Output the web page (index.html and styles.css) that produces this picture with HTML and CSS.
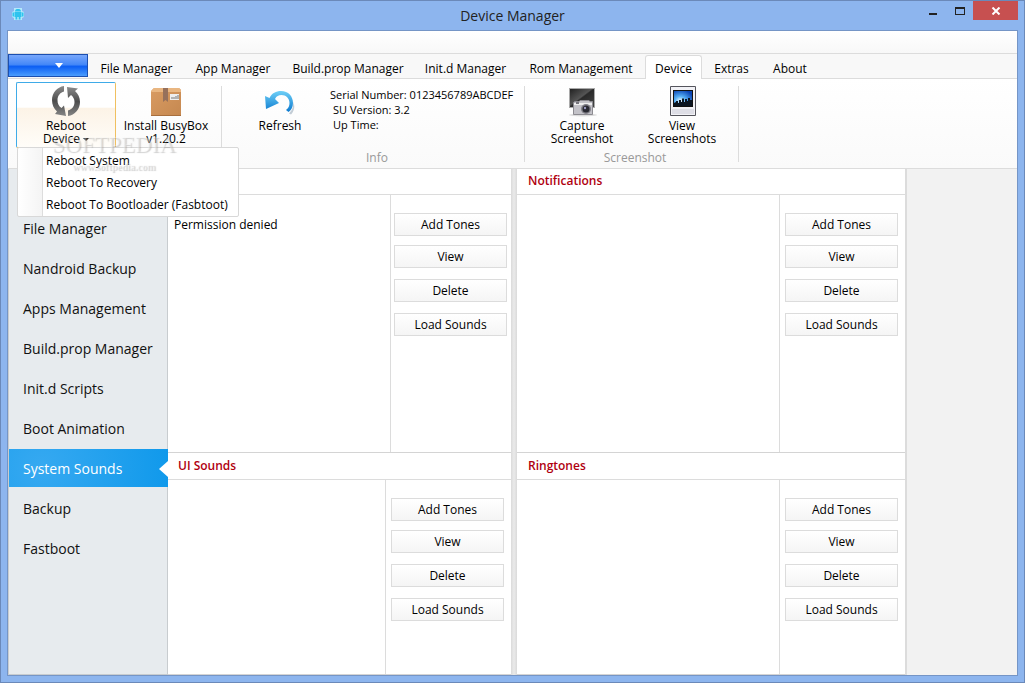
FILE: index.html
```html
<!DOCTYPE html>
<html lang="en">
<head>
<meta charset="utf-8">
<title>Device Manager</title>
<link rel="stylesheet" href="styles.css">
</head>
<body>
<div class="window">
  <header class="titlebar">
    <svg class="app-icon" viewBox="0 0 12 14" width="12" height="14" aria-hidden="true">
      <path fill="#b5e9fb" d="M2 1h8v3l2 1v5l-2 1v2H2v-2l-2-1V5l2-1z"/>
      <path fill="#2fc3ee" d="M3 4.500C3 2.600 4.300 2 6 2s3 .6 3 2.500zM2.500 5h7v5h-7zM.5 5.500h1.500v4H.5zM10 5.500h1.500v4H10zM3.500 10h1.800v2.500H3.500zM6.700 10h1.800v2.500H6.700z"/>
    </svg>
    <h1 class="title">Device Manager</h1>
    <div class="controls">
      <button class="control" aria-label="Minimize"><svg width="12" height="14" viewBox="0 0 12 14"><path fill="#222" d="M2 12h8v2H2z"/></svg></button>
      <button class="control" aria-label="Maximize"><svg width="12" height="14" viewBox="0 0 12 14"><path fill="#222" fill-rule="evenodd" d="M1 6h10v8H1zM2 8v5h8V8z"/></svg></button>
      <button class="control control-close" aria-label="Close"><svg width="10" height="8" viewBox="0 0 10 8"><path fill="none" stroke="#fff" stroke-width="2" d="M1.500.5l7 7M8.500.5l-7 7"/></svg></button>
    </div>
  </header>
  <div class="client">
    <div class="quickbar"></div>
    <nav class="tabs">
      <button class="file-tab" aria-label="Application menu"><svg width="8" height="5" viewBox="0 0 8 5"><path fill="#fff" d="M0 0h8L4 5z"/></svg></button>
      <button class="tab">File Manager</button>
      <button class="tab">App Manager</button>
      <button class="tab">Build.prop Manager</button>
      <button class="tab">Init.d Manager</button>
      <button class="tab">Rom Management</button>
      <button class="tab tab-active">Device</button>
      <button class="tab">Extras</button>
      <button class="tab">About</button>
    </nav>
    <div class="ribbon">
      <section class="group group-device">
        <div class="dropdown">
          <button class="tool tool-open">
            <svg class="tool-icon" viewBox="0 0 32 32" aria-hidden="true">
              <defs><linearGradient id="steel" x1="0" y1="0" x2="0" y2="1"><stop offset="0" stop-color="#8a8a8a"/><stop offset=".5" stop-color="#4c4c4c"/><stop offset="1" stop-color="#858585"/></linearGradient></defs>
              <path fill="url(#steel)" d="M14 1C7 2 2 8 2 15c0 5 2 9 5 11.500L5 29l11 2-2-10.500-2.500 2.500C8.500 21 7.500 18.500 7.500 15c0-4 2.500-7.500 6.500-8.500z"/>
              <path fill="url(#steel)" d="M18 31c7-1 12-7 12-14 0-4.500-2-8.500-5-11l3-2.500L17 2l1 11 3-3c2 1.500 3.500 4 3.500 7 0 4-2.500 7.500-6.500 8.500z"/>
            </svg>
            <span>Reboot<br>Device <i class="caret"></i></span>
          </button>
          <ul class="menu">
            <li><button class="menu-item">Reboot System</button></li>
            <li><button class="menu-item">Reboot To Recovery</button></li>
            <li><button class="menu-item">Reboot To Bootloader (Fasbtoot)</button></li>
          </ul>
          <div class="watermark" aria-hidden="true"><b>SOFTPEDIA</b><span>www.softpedia.com</span></div>
        </div>
        <button class="tool">
          <svg class="tool-icon" viewBox="0 0 32 32" aria-hidden="true">
            <defs><linearGradient id="card" x1="0" y1="0" x2="1" y2="1"><stop offset="0" stop-color="#d99b62"/><stop offset="1" stop-color="#c58850"/></linearGradient></defs>
            <path fill="url(#card)" d="M2 5l2-2h25l2 2v26H1V6z"/>
            <path fill="#e9b681" d="M2 5l2-2h25l2 2v2H1z"/>
            <path fill="#96705b" d="M13 3h5v14l-2.500-2-2.500 2z"/>
            <path fill="#eee" d="M20 9h9v6h-9z"/><path stroke="#777" d="M21 13h2m1-1v2m2-3v3m2-4v4"/>
            <path stroke="#a86f3e" d="M1 30.500h30"/>
          </svg>
          <span>Install BusyBox<br>v1.20.2</span>
        </button>
      </section>
      <section class="group group-info">
        <div class="group-body">
          <button class="tool">
            <svg class="tool-icon" viewBox="0 0 32 32" aria-hidden="true">
              <defs><linearGradient id="azure" x1="0" y1="0" x2="0" y2="1"><stop offset="0" stop-color="#6fd0f7"/><stop offset="1" stop-color="#0b79cf"/></linearGradient></defs>
              <path fill="#c3cdd6" d="M25 28.500c3-3 5-7 4-12l1 3c1 4-1 8-3 10z"/>
              <path fill="url(#azure)" d="M1 11l4.500 2C8 8 12 6 17 6c7.500 0 12 5.500 12 12 0 4-2 7.500-4.500 9L22 25c2.500-2 3.500-4 3.500-7 0-4.500-3.500-8-8-8-3 0-5 1-6.500 4l4 4L2 24z"/>
            </svg>
            <span>Refresh</span>
          </button>
          <div class="info"><p>Serial Number: 0123456789ABCDEF</p><p class="info-sub">SU Version: 3.2</p><p class="info-sub">Up Time:</p></div>
        </div>
        <h2 class="group-label">Info</h2>
      </section>
      <section class="group group-shots">
        <div class="group-body">
          <button class="tool">
            <svg class="tool-icon" viewBox="0 0 32 32" aria-hidden="true">
              <defs><linearGradient id="screen" x1="0" y1="0" x2="1" y2="1"><stop offset="0" stop-color="#222"/><stop offset=".45" stop-color="#555"/><stop offset=".5" stop-color="#2a2a2a"/><stop offset="1" stop-color="#444"/></linearGradient></defs>
              <path fill="#aaa" d="M3 3h26v20H3z"/><path fill="url(#screen)" d="M4 4h24v18H4z"/>
              <ellipse cx="17" cy="30" rx="14" ry="1.500" fill="#ddd"/>
              <path fill="#c3c2c8" stroke="#8c8b91" d="M7.500 17.500l1.500-1h4l1-1h9l1 1h2.500v13h-19z"/>
              <path fill="#eee" d="M8 18h18v2H8z"/><path fill="#76757c" d="M10 17h3v2h-3z"/>
              <circle cx="20" cy="24" r="5" fill="#807f87"/><circle cx="20" cy="24" r="3.500" fill="#292932"/><circle cx="19" cy="23" r="1.200" fill="#9a9ac0"/>
            </svg>
            <span>Capture<br>Screenshot</span>
          </button>
          <button class="tool">
            <svg class="tool-icon" viewBox="0 0 32 32" aria-hidden="true">
              <defs><radialGradient id="sky" cx=".35" cy=".65" r=".75"><stop offset="0" stop-color="#f3fcff"/><stop offset=".4" stop-color="#55aef5"/><stop offset="1" stop-color="#0b44b2"/></radialGradient></defs>
              <path fill="#f2f2f6" stroke="#55555d" d="M4.500 1.500h25v29h-25z"/>
              <path fill="#111" d="M7 5h20v17H7z"/><path fill="url(#sky)" d="M8 6h18v15H8z"/>
              <path fill="#0b1522" d="M8 18l2-1v-1h2v2h1v-3h2v2h1v-3l1-1 1 1v3h1v-3h2v2h1v-3h2v2h2v6H8z"/>
              <path fill="#dedee6" d="M6 24h22v5H6z"/>
            </svg>
            <span>View<br>Screenshots</span>
          </button>
        </div>
        <h2 class="group-label">Screenshot</h2>
      </section>
    </div>
    <div class="content">
      <nav class="sidebar">
        <a class="side-link" href="#">File Manager</a>
        <a class="side-link" href="#">Nandroid Backup</a>
        <a class="side-link" href="#">Apps Management</a>
        <a class="side-link" href="#">Build.prop Manager</a>
        <a class="side-link" href="#">Init.d Scripts</a>
        <a class="side-link" href="#">Boot Animation</a>
        <a class="side-link side-active" href="#">System Sounds</a>
        <a class="side-link" href="#">Backup</a>
        <a class="side-link" href="#">Fastboot</a>
      </nav>
      <main class="column column-left">
        <section class="panel panel-top">
          <h2 class="panel-title"></h2>
          <div class="panel-body">
            <div class="list">Permission denied</div>
            <div class="actions actions-wide"><button class="action action-first">Add Tones</button><button class="action">View</button><button class="action">Delete</button><button class="action">Load Sounds</button></div>
          </div>
        </section>
        <section class="panel panel-bottom">
          <h2 class="panel-title">UI Sounds</h2>
          <div class="panel-body">
            <div class="list"></div>
            <div class="actions"><button class="action action-first">Add Tones</button><button class="action">View</button><button class="action">Delete</button><button class="action">Load Sounds</button></div>
          </div>
        </section>
      </main>
      <div class="splitter"></div>
      <div class="column column-right">
        <section class="panel panel-top">
          <h2 class="panel-title">Notifications</h2>
          <div class="panel-body">
            <div class="list"></div>
            <div class="actions"><button class="action action-first">Add Tones</button><button class="action">View</button><button class="action">Delete</button><button class="action">Load Sounds</button></div>
          </div>
        </section>
        <section class="panel panel-bottom">
          <h2 class="panel-title">Ringtones</h2>
          <div class="panel-body">
            <div class="list"></div>
            <div class="actions"><button class="action action-first">Add Tones</button><button class="action">View</button><button class="action">Delete</button><button class="action">Load Sounds</button></div>
          </div>
        </section>
      </div>
      <div class="blank"></div>
    </div>
  </div>
</div>
</body>
</html>
```
FILE: styles.css
```css
* { box-sizing: border-box; }
body { margin: 0; font: 12px/15px "Open Sans", "Noto Sans", sans-serif; color: #000; }
button { margin: 0; padding: 0; border: 0; background: none; font: inherit; color: inherit; }
h1, h2, p, ul { margin: 0; padding: 0; font-weight: normal; }
svg { display: block; }

.window { display: flex; flex-direction: column; height: 100vh; border: 1px solid #6b89b9; background: #8db5ee; padding: 0 6px 6px; }
.titlebar { display: grid; grid-template-columns: 1fr auto 1fr; flex: none; height: 29px; }
.app-icon { margin: 6px 0 0 5px; }
.title { font-size: 14px; line-height: 29px; color: #222; }
.controls { display: flex; justify-content: flex-end; align-items: flex-start; }
.control { display: flex; justify-content: center; width: 27px; height: 19px; }
.control-close { width: 45px; align-items: center; background: #c75050; }

.client { display: flex; flex-direction: column; flex: 1; min-height: 0; border: 1px solid #7595c6; background: #f2f2f2; }
.quickbar { flex: none; height: 23px; border-bottom: 1px solid #dcdcdc; background: linear-gradient(#fff, #f8f8f8); }
.tabs { display: grid; grid-template-columns: 81px 95px 98px 132px 103px 128px 57px 59px 58px; flex: none; height: 25px; border-bottom: 1px solid #dcdcdc; background: #f8f8f8; }
.file-tab { display: flex; align-items: center; justify-content: center; width: 80px; height: 23px; padding-left: 21px; border: 1px solid #1c4fb0; background: linear-gradient(#78a7fb, #4588f8 45%, #0c5ff4 55%, #4b9dfd); }
.tab { padding-top: 3px; white-space: nowrap; }
.tab-active { height: 25px; margin-top: 1px; padding-top: 1px; border: 1px solid #dcdcdc; border-bottom: 0; border-radius: 3px 3px 0 0; background: #fff; }

.ribbon { display: flex; flex: none; height: 90px; border-bottom: 1px solid #dcdcdc; background: linear-gradient(#fff, #fafafa); }
.group { display: flex; flex-direction: column; height: 76px; margin-top: 7px; border-right: 1px solid #dcdcdc; }
.group-device { flex-direction: row; width: 214px; padding-left: 8px; }
.group-info { width: 303px; padding-left: 8px; }
.group-shots { width: 214px; padding-left: 7px; }
.group-body { display: flex; flex: 1; min-height: 0; }
.group-label { flex: none; color: #999; font-size: 12px; text-align: center; line-height: 8px; }
.tool { flex: none; width: 100px; height: 66px; margin-top: -4px; padding-top: 2px; border: 1px solid transparent; line-height: 13px; white-space: nowrap; display: flex; flex-direction: column; align-items: center; gap: 2px; }
.tool-icon { flex: none; width: 32px; height: 32px; }
.tool-open { border-color: #3fabe8 #f0c060 #f0c060 #3fabe8; border-radius: 2px; background: linear-gradient(#fff 38%, #fcf3e6 39%, #fffdf9); }
.caret { display: inline-block; vertical-align: middle; border: 3px solid transparent; border-top-color: #111; border-bottom: 0; }
.info { padding-top: 1px; font-size: 11px; line-height: 15px; white-space: nowrap; }
.info-sub { padding-left: 3px; }

.dropdown { position: relative; }
.menu { position: absolute; top: 61px; left: 1px; z-index: 2; width: 222px; padding: 1px; border: 1px solid #d8d8d8; border-radius: 2px; list-style: none; background: linear-gradient(90deg, #fff, #f4f4f4 24px, #ddd 24px, #ddd 25px, #fff 25px); }
.menu-item { width: 100%; height: 22px; padding-left: 27px; text-align: left; white-space: nowrap; display: block; }
.watermark { position: absolute; top: 48px; left: 36px; z-index: 3; color: rgba(255, 255, 255, .3); text-shadow: 1px 1px 1px rgba(120, 120, 120, .35); font-family: "Liberation Serif", serif; pointer-events: none; text-align: center; }
.watermark b { display: block; font-size: 23px; line-height: 22px; font-weight: normal; }
.watermark span { display: block; font-size: 10px; line-height: 22px; font-weight: bold; }

.content { display: grid; grid-template-columns: 160px 343px 6px 388px 1fr; flex: 1; min-height: 0; }
.sidebar { display: flex; flex-direction: column; gap: 2px; padding-top: 40px; border: 1px solid #c8cccf; border-top: 0; background: #e7ebee; font-size: 14px; }
.side-link { height: 38px; padding-left: 14px; line-height: 40px; color: #111; text-decoration: none; white-space: nowrap; }
.side-active { position: relative; margin-right: -1px; background: radial-gradient(circle at 20% 50%, #36a9f1, #1099eb); color: #fff; }
.side-active::after { content: ""; position: absolute; right: 0; top: 12px; border: 8px solid transparent; border-left: 0; border-right: 9px solid #fff; }

.column { display: grid; grid-template-rows: 284fr 222fr; background: #fff; min-height: 0; }
.panel { display: flex; flex-direction: column; border-bottom: 1px solid #d4d4d4; }
.panel-title { height: 26px; padding-left: 10px; border-bottom: 1px solid #dcdcdc; color: #b00010; font-size: 12px; font-weight: 600; line-height: 24px; }
.panel-bottom .panel-title { height: 27px; line-height: 25px; }
.column-right .panel-title { padding-left: 11px; }
.panel-body { display: flex; flex: 1; }
.list { flex: 1; padding: 22px 6px 0; font-weight: 500; }
.actions { display: flex; flex-direction: column; gap: 11px; width: 126px; padding: 18px 0 0 5px; border-left: 1px solid #dcdcdc; }
.actions-wide { width: 121px; padding-left: 3px; }
.action { width: 113px; height: 23px; border: 1px solid #dcdcdc; background: linear-gradient(#fff, #f5f5f5); line-height: 20px; font-weight: 500; }
.action-first { margin-bottom: -2px; }

.splitter { background: linear-gradient(90deg, #dadada, #eaeaea 50%, #dadada); }
.blank { border-left: 2px solid #dcdcdc; background: #f2f2f2; }
```
